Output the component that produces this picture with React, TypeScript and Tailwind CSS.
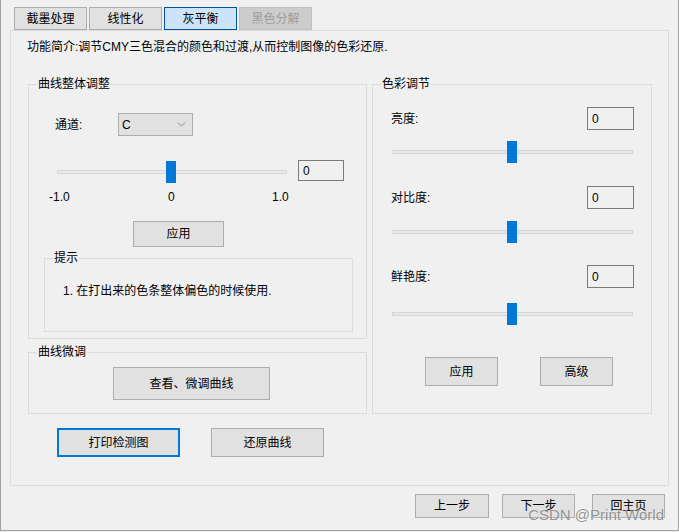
import { ChevronDown } from 'lucide-react';

const font = { fontFamily: '"Liberation Sans", "Noto Sans CJK SC", sans-serif' };

function Tab({ label, active, disabled }: { label: string; active?: boolean; disabled?: boolean }) {
  let cls = 'bg-[#e1e1e1] border-[#adadad] text-black';
  if (active) cls = 'bg-[#cce4f7] border-[#005499] text-black';
  if (disabled) cls = 'bg-[#cccccc] border-[#bfbfbf] text-[#9d9d9d]';
  return (
    <div className={`w-[73px] h-[23px] border flex items-center justify-center text-[12px] ${cls}`}>
      {label}
    </div>
  );
}

function Button({ label, className = '', focused }: { label: string; className?: string; focused?: boolean }) {
  return (
    <div
      className={`flex items-center justify-center bg-[#e1e1e1] text-[12px] text-black ${
        focused ? 'border-2 border-[#0078d7]' : 'border border-[#adadad]'
      } ${className}`}
    >
      {label}
    </div>
  );
}

function Group({ title, className = '', titleLeft = 'left-[8px]', children }: { title: string; className?: string; titleLeft?: string; children?: React.ReactNode }) {
  return (
    <div className={`relative border border-[#dcdcdc] ${className}`}>
      <span className={`absolute -top-[9px] ${titleLeft} bg-[#f0f0f0] px-[1px] text-[12px] leading-[16px] text-black`}>
        {title}
      </span>
      {children}
    </div>
  );
}

function Slider({ width, thumb, className = '' }: { width: number; thumb: number; className?: string }) {
  return (
    <div className={`relative h-[22px] ${className}`} style={{ width }}>
      <div className="absolute left-0 right-0 top-[9px] h-[4px] bg-[#e7eaea] border border-[#d6d6d6]" />
      <div className="absolute top-0 w-[10px] h-[22px] bg-[#0078d7]" style={{ left: thumb }} />
    </div>
  );
}

function ValueBox({ className = '' }: { className?: string }) {
  return (
    <div className={`border border-[#7a7a7a] bg-[#f0f0f0] text-[12px] leading-none flex items-center pl-[4px] text-black ${className}`}>
      0
    </div>
  );
}

export default function App() {
  return (
    <div className="w-[679px] h-[532px] bg-[#f0f0f0] overflow-hidden" style={font}>
      <div className="relative w-[679px] h-[531px] border-l border-r border-b border-[#a0a0a0]">
        {/* tabs */}
        <div className="flex gap-[2px] pl-[13px] pt-[7px]">
          <Tab label="截墨处理" />
          <Tab label="线性化" />
          <Tab label="灰平衡" active />
          <Tab label="黑色分解" disabled />
        </div>

        {/* tab page */}
        <div className="ml-[9px] w-[659px] h-[456px] border border-[#dcdcdc]">
          <div className="mt-[8px] ml-[16px] text-[12px] leading-[16px] text-black">
            功能简介:调节CMY三色混合的颜色和过渡,从而控制图像的色彩还原.
          </div>

          <div className="flex mt-[29px] ml-[17px]">
            {/* left column */}
            <div className="w-[339px]">
              <Group title="曲线整体调整" className="h-[255px]">
                <div className="flex items-center mt-[28px]">
                  <span className="ml-[26px] w-[63px] text-[12px] leading-[16px]">通道:</span>
                  <div className="w-[75px] h-[23px] border border-[#adadad] bg-[#e1e1e1] flex items-center justify-between pl-[3px] pr-[4px] text-[12px]">
                    <span>C</span>
                    <ChevronDown size={13} strokeWidth={1.2} color="#606060" />
                  </div>
                </div>
                <div className="flex items-start mt-[24px]">
                  <Slider width={230} thumb={109} className="ml-[28px] mt-[1px]" />
                  <ValueBox className="ml-[11px] w-[46px] h-[21px]" />
                </div>
                <div className="flex mt-[6px] ml-[20px] text-[12px] leading-[16px]">
                  <span className="w-[119px]">-1.0</span>
                  <span className="w-[104px]">0</span>
                  <span>1.0</span>
                </div>
                <Button label="应用" className="mt-[16px] ml-[104px] w-[91px] h-[26px]" />
                <Group title="提示" className="mt-[11px] ml-[15px] w-[309px] h-[74px]">
                  <div className="mt-[24px] ml-[18px] text-[12px] leading-[16px]">
                    1. 在打出来的色条整体偏色的时候使用.
                  </div>
                </Group>
              </Group>

              <Group title="曲线微调" className="mt-[13px] h-[62px]">
                <Button label="查看、微调曲线" className="mt-[14px] ml-[84px] w-[157px] h-[33px]" />
              </Group>

              <div className="flex mt-[14px] ml-[29px]">
                <Button label="打印检测图" focused className="w-[123px] h-[29px]" />
                <Button label="还原曲线" className="ml-[31px] w-[113px] h-[29px]" />
              </div>
            </div>

            {/* right column */}
            <Group title="色彩调节" className="ml-[5px] w-[280px] h-[330px]">
              <div className="flex items-center justify-between mt-[22px] ml-[18px] mr-[17px]">
                <span className="text-[12px] leading-[16px]">亮度:</span>
                <ValueBox className="w-[47px] h-[23px]" />
              </div>
              <Slider width={241} thumb={115} className="mt-[11px] ml-[19px]" />

              <div className="flex items-center justify-between mt-[23px] ml-[18px] mr-[17px]">
                <span className="text-[12px] leading-[16px]">对比度:</span>
                <ValueBox className="w-[47px] h-[23px]" />
              </div>
              <Slider width={241} thumb={115} className="mt-[12px] ml-[19px]" />

              <div className="flex items-center justify-between mt-[22px] ml-[18px] mr-[17px]">
                <span className="text-[12px] leading-[16px]">鲜艳度:</span>
                <ValueBox className="w-[47px] h-[23px]" />
              </div>
              <Slider width={241} thumb={115} className="mt-[15px] ml-[19px]" />

              <div className="flex mt-[32px] ml-[52px]">
                <Button label="应用" className="w-[73px] h-[29px]" />
                <Button label="高级" className="ml-[42px] w-[73px] h-[29px]" />
              </div>
            </Group>
          </div>
        </div>

        {/* bottom navigation */}
        <div className="flex mt-[8px] ml-[414px]">
          <Button label="上一步" className="w-[74px] h-[24px]" />
          <Button label="下一步" className="ml-[13px] w-[73px] h-[24px]" />
          <Button label="回主页" className="ml-[17px] w-[73px] h-[24px]" />
        </div>

        <span
          className="absolute right-[14px] bottom-[6px] text-[15px] leading-[18px] text-[#8a8a8a] opacity-90"
          style={{ fontFamily: '"Liberation Sans", Arial, sans-serif', textShadow: '0 0 2px #ffffff' }}
        >
          CSDN @Print World
        </span>
      </div>
    </div>
  );
}
